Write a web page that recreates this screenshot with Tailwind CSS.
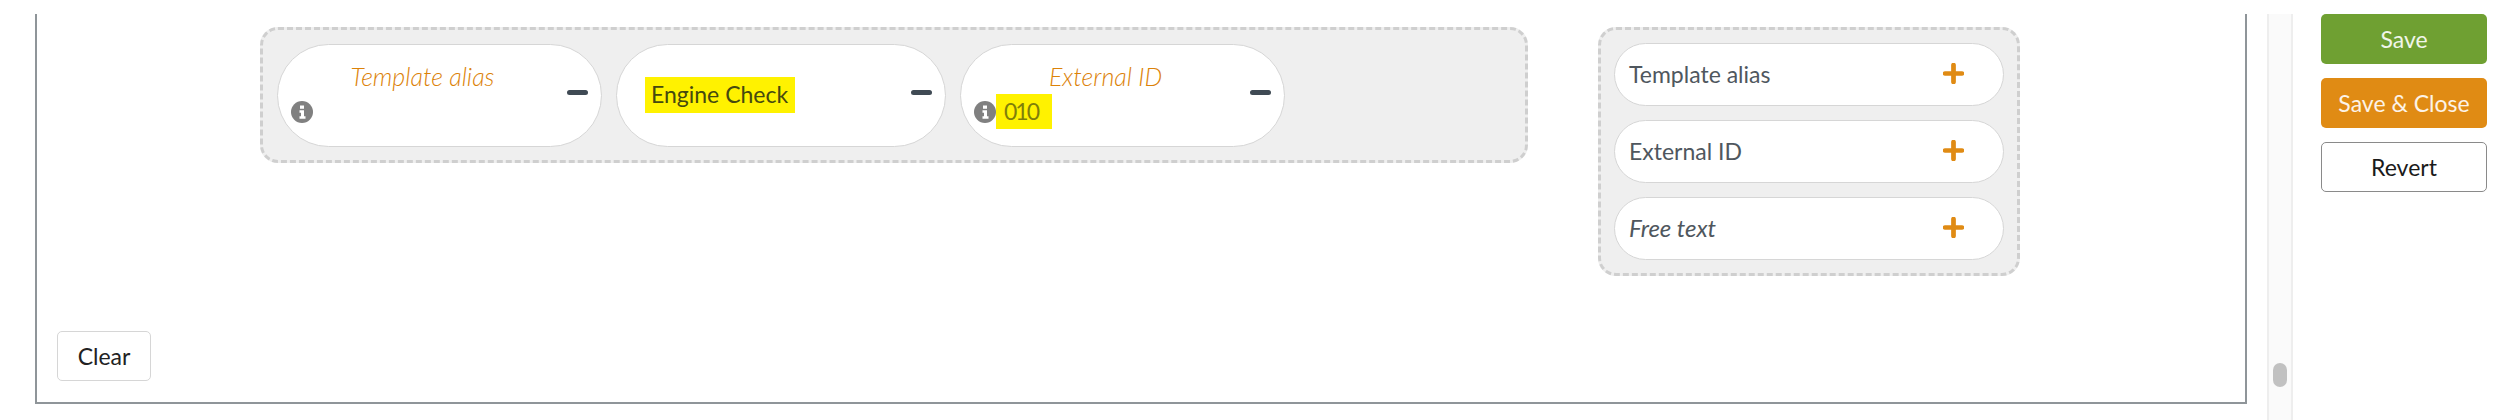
<!doctype html>
<html>
<head>
<meta charset="utf-8">
<script src="https://cdn.jsdelivr.net/npm/@tailwindcss/browser@4"></script>
</head>
<body class="bg-white">
<div class="flex h-[420px] w-[2500px] overflow-hidden pt-[14px] font-['Lato','Liberation_Sans',sans-serif] text-[23px] text-[#4f575e]">
  <main class="ml-[35px] flex h-[390px] w-[2212px] flex-col border-x-2 border-b-2 border-[#8f9599]">
    <div class="flex items-start pl-[223px] pt-[13px]">
      <section class="flex h-[136px] w-[1268px] items-start gap-[14px] rounded-[18px] border-[3px] border-dashed border-[#cfcfcf] bg-[#efefef] px-[14px] pt-[14px]">
        <div class="flex h-[103px] w-[325px] items-center justify-between rounded-[52px] border-[1.5px] border-[#d6d6d6] bg-white pr-[13px]">
          <div class="flex w-[290px] flex-col">
            <span class="-mt-[4px] h-[36px] text-center text-[25px] font-light italic leading-[36px] text-[#dc8208]">Template alias</span>
            <div class="flex h-[35px] items-center pl-[13px]">
              <svg class="h-[22px] w-[22px]" viewBox="0 0 22 22"><circle cx="11" cy="11" r="11" fill="#808080"/><path d="M9 4.500h4v3.200H9zM8.500 9.200H13v6h1.500v2.600h-6v-2.600H10v-3.400H8.500z" fill="#fff"/></svg>
            </div>
          </div>
          <span class="mt-[-6px] h-[5px] w-[21px] rounded-full bg-[#3f4a54]"></span>
        </div>
        <div class="flex h-[103px] w-[330px] items-center justify-between rounded-[52px] border-[1.5px] border-[#d6d6d6] bg-white pr-[13px]">
          <span class="ml-[28px] mt-[-2px] flex h-[36px] w-[150px] items-center bg-[#fff200] pl-[6px] leading-none text-[#46490f]">Engine Check</span>
          <span class="mt-[-6px] h-[5px] w-[21px] rounded-full bg-[#3f4a54]"></span>
        </div>
        <div class="flex h-[103px] w-[325px] items-center justify-between rounded-[52px] border-[1.5px] border-[#d6d6d6] bg-white pr-[13px]">
          <div class="flex w-[290px] flex-col">
            <span class="-mt-[4px] h-[36px] text-center text-[25px] font-light italic leading-[36px] text-[#dc8208]">External ID</span>
            <div class="flex h-[35px] items-center pl-[13px]">
              <svg class="h-[22px] w-[22px] shrink-0" viewBox="0 0 22 22"><circle cx="11" cy="11" r="11" fill="#808080"/><path d="M9 4.500h4v3.200H9zM8.500 9.200H13v6h1.500v2.600h-6v-2.600H10v-3.400H8.500z" fill="#fff"/></svg>
              <span class="flex h-[35px] w-[56px] items-center bg-[#fff200] pl-[8px] leading-none tracking-[-2px] text-[#7f7f0a]">010</span>
            </div>
          </div>
          <span class="mt-[-6px] h-[5px] w-[21px] rounded-full bg-[#3f4a54]"></span>
        </div>
      </section>
      <aside class="ml-[70px] flex h-[249px] w-[422px] flex-col gap-[14px] rounded-[18px] border-[3px] border-dashed border-[#cfcfcf] bg-[#efefef] px-[13px] pt-[13px]">
        <div class="flex h-[63px] items-center justify-between rounded-[32px] border-[1.5px] border-[#d6d6d6] bg-white pl-[14px] pr-[39px]">
          <span class="-mt-[1px]">Template alias</span>
          <svg class="-mt-[2px] h-[21px] w-[21px]" viewBox="0 0 20 20"><path d="M10 2v16M2 10h16" stroke="#e08b14" stroke-width="4.500" stroke-linecap="round"/></svg>
        </div>
        <div class="flex h-[63px] items-center justify-between rounded-[32px] border-[1.5px] border-[#d6d6d6] bg-white pl-[14px] pr-[39px]">
          <span class="-mt-[1px]">External ID</span>
          <svg class="-mt-[2px] h-[21px] w-[21px]" viewBox="0 0 20 20"><path d="M10 2v16M2 10h16" stroke="#e08b14" stroke-width="4.500" stroke-linecap="round"/></svg>
        </div>
        <div class="flex h-[63px] items-center justify-between rounded-[32px] border-[1.5px] border-[#d6d6d6] bg-white pl-[14px] pr-[39px]">
          <span class="-mt-[1px] text-[24px] italic">Free text</span>
          <svg class="-mt-[2px] h-[21px] w-[21px]" viewBox="0 0 20 20"><path d="M10 2v16M2 10h16" stroke="#e08b14" stroke-width="4.500" stroke-linecap="round"/></svg>
        </div>
      </aside>
    </div>
    <button class="mb-[21px] ml-[20px] mt-auto flex h-[50px] w-[94px] items-center justify-center rounded-[5px] border-[1.5px] border-[#d6d6d6] bg-white text-[#222222]">Clear</button>
  </main>
  <div class="relative ml-[20px] h-full w-[26px] border-x-2 border-[#eeeeee] bg-[#fafafa]">
    <span class="absolute left-[4px] top-[349px] h-[24px] w-[14px] rounded-full bg-[#c1c1c1]"></span>
  </div>
  <div class="ml-[28px] flex w-[166px] flex-col gap-[14px]">
    <button class="h-[50px] rounded-[5px] bg-[#6fa032] text-white/90">Save</button>
    <button class="h-[50px] rounded-[5px] bg-[#e08b14] text-white/90">Save &amp; Close</button>
    <button class="h-[50px] rounded-[5px] border-[1.5px] border-[#8a8a8a] bg-white text-[#1a1a1a]">Revert</button>
  </div>
</div>
</body>
</html>
